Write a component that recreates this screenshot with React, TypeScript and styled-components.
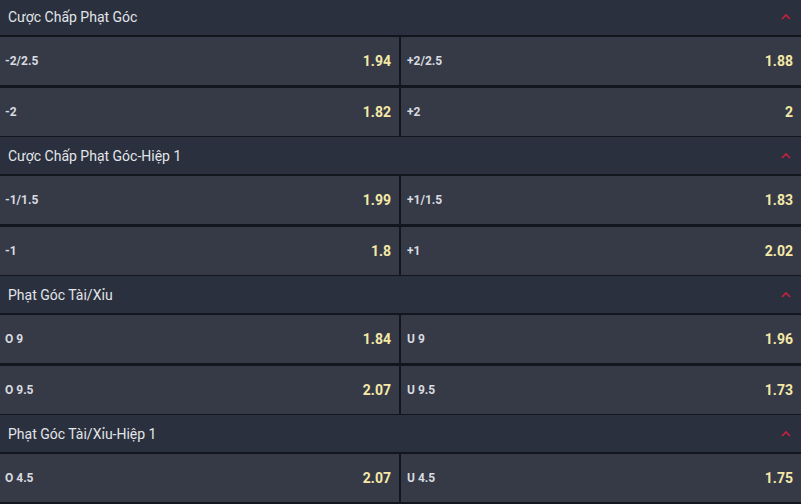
import styled, { createGlobalStyle } from 'styled-components';

type Market = {
  title: string;
  rows: [string, string, string, string][];
};

const markets: Market[] = [
  {
    title: 'Cược Chấp Phạt Góc',
    rows: [
      ['-2/2.5', '1.94', '+2/2.5', '1.88'],
      ['-2', '1.82', '+2', '2'],
    ],
  },
  {
    title: 'Cược Chấp Phạt Góc-Hiệp 1',
    rows: [
      ['-1/1.5', '1.99', '+1/1.5', '1.83'],
      ['-1', '1.8', '+1', '2.02'],
    ],
  },
  {
    title: 'Phạt Góc Tài/Xỉu',
    rows: [
      ['O 9', '1.84', 'U 9', '1.96'],
      ['O 9.5', '2.07', 'U 9.5', '1.73'],
    ],
  },
  {
    title: 'Phạt Góc Tài/Xỉu-Hiệp 1',
    rows: [['O 4.5', '2.07', 'U 4.5', '1.75']],
  },
];

const GlobalStyle = createGlobalStyle`
  html, body {
    margin: 0;
    padding: 0;
    background: #12161e;
    overflow: hidden;
  }
  body {
    font-family: Roboto, "Noto Sans", sans-serif;
  }
`;

const Page = styled.div`
  width: 801px;
  margin-top: -2px;
  background: #12161e;
`;

const Section = styled.section`
  display: flex;
  flex-direction: column;
`;

const Header = styled.div`
  height: 37px;
  display: flex;
  align-items: center;
  justify-content: space-between;
  padding: 0 8px;
  background: #2a303d;
  color: #e3e5ea;
  font-size: 14px;
`;

const Chevron = styled.svg`
  width: 12px;
  height: 12px;
  margin-right: 1px;
`;

const Grid = styled.div`
  display: grid;
  grid-template-columns: 399px 400px;
  column-gap: 2px;
  row-gap: 3px;
  padding: 2px 0 1px;
`;

const Cell = styled.div<{ $right?: boolean }>`
  height: 48px;
  display: flex;
  align-items: center;
  justify-content: space-between;
  padding: 0 ${(p) => (p.$right ? '8px' : '8px')} 0 ${(p) => (p.$right ? '6px' : '5px')};
  background: #353a46;
  cursor: pointer;
`;

const Label = styled.span`
  color: #d9dbe0;
  font-size: 12px;
  font-weight: 700;
`;

const Odds = styled.span`
  color: #f6e9a8;
  font-size: 14px;
  font-weight: 700;
`;

function MarketBlock({ market }: { market: Market }) {
  return (
    <Section>
      <Header>
        <span>{market.title}</span>
        <Chevron viewBox="0 0 12 12">
          <path d="M2 8 L6 4 L10 8" fill="none" stroke="#c8213f" strokeWidth="1.6" />
        </Chevron>
      </Header>
      <Grid>
        {market.rows.flatMap((r, i) => [
          <Cell key={`l${i}`}>
            <Label>{r[0]}</Label>
            <Odds>{r[1]}</Odds>
          </Cell>,
          <Cell key={`r${i}`} $right>
            <Label>{r[2]}</Label>
            <Odds>{r[3]}</Odds>
          </Cell>,
        ])}
      </Grid>
    </Section>
  );
}

export default function App() {
  return (
    <>
      <GlobalStyle />
      <Page>
        {markets.map((m) => (
          <MarketBlock key={m.title} market={m} />
        ))}
      </Page>
    </>
  );
}
